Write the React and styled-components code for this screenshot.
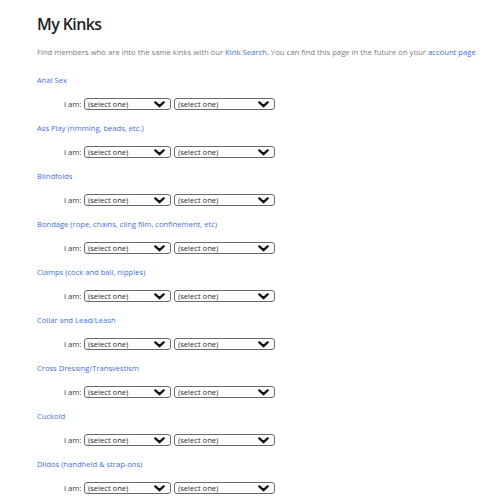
import React from "react";
import styled, { createGlobalStyle } from "styled-components";

const Global = createGlobalStyle`
  html, body { margin: 0; padding: 0; background: #ffffff; }
  body { font-family: "Open Sans", "Noto Sans", sans-serif; }
`;

const Page = styled.div`
  padding: 12px 0 0 37px;
  width: 496px;
  height: 503px;
  box-sizing: border-box;
  overflow: hidden;
`;

const Title = styled.h1`
  margin: 0;
  font-size: 16px;
  line-height: 24px;
  font-weight: 600;
  letter-spacing: -0.6px;
  color: #1f1f1f;
`;

const Intro = styled.p`
  margin: 10px 0 16px;
  font-size: 7.7px;
  line-height: 12px;
  color: #7a7a7a;
  white-space: nowrap;
`;

const Link = styled.a`
  color: #3f6fd6;
  text-decoration: none;
`;

const KinkBlock = styled.section`
  display: flex;
  flex-direction: column;
  gap: 12px;
  margin-bottom: 12px;
`;

const KinkName = styled.a`
  font-size: 7.6px;
  line-height: 12px;
  color: #3f6fd6;
  text-decoration: none;
`;

const Row = styled.div`
  display: flex;
  align-items: center;
  height: 12px;
  padding-left: 27px;
`;

const RowLabel = styled.span`
  font-size: 7.6px;
  color: #3a3a3a;
  width: 20px;
  white-space: nowrap;
`;

const SelectBox = styled.div`
  box-sizing: border-box;
  width: ${(p) => p.$w}px;
  height: 12px;
  margin-right: ${(p) => p.$gap || 0}px;
  border: 1px solid #6a6a6a;
  border-radius: 3px;
  display: flex;
  align-items: center;
  justify-content: space-between;
  padding: 0 5px 0 3px;
  font-size: 7.6px;
  color: #2a2a2a;
  background: #fff;
`;

const Chevron = () => (
  <svg width="11" height="7" viewBox="0 0 11 7">
    <path
      d="M1.4 1.4 L5.5 5.2 L9.6 1.4"
      fill="none"
      stroke="#111"
      strokeWidth="2.3"
      strokeLinecap="round"
      strokeLinejoin="round"
    />
  </svg>
);

const kinks = [
  "Anal Sex",
  "Ass Play (rimming, beads, etc.)",
  "Blindfolds",
  "Bondage (rope, chains, cling film, confinement, etc)",
  "Clamps (cock and ball, nipples)",
  "Collar and Lead/Leash",
  "Cross Dressing/Transvestism",
  "Cuckold",
  "Dildos (handheld & strap-ons)",
];

export default function App() {
  return (
    <>
      <Global />
      <Page>
        <Title>My Kinks</Title>
        <Intro>
          Find members who are into the same kinks with our{" "}
          <Link href="#">Kink Search</Link>. You can find this page in the
          future on your <Link href="#">account page</Link>.
        </Intro>
        {kinks.map((k) => (
          <KinkBlock key={k}>
            <KinkName href="#">{k}</KinkName>
            <Row>
              <RowLabel>I am:</RowLabel>
              <SelectBox $w={87} $gap={3}>
                <span>(select one)</span>
                <Chevron />
              </SelectBox>
              <SelectBox $w={101}>
                <span>(select one)</span>
                <Chevron />
              </SelectBox>
            </Row>
          </KinkBlock>
        ))}
      </Page>
    </>
  );
}
